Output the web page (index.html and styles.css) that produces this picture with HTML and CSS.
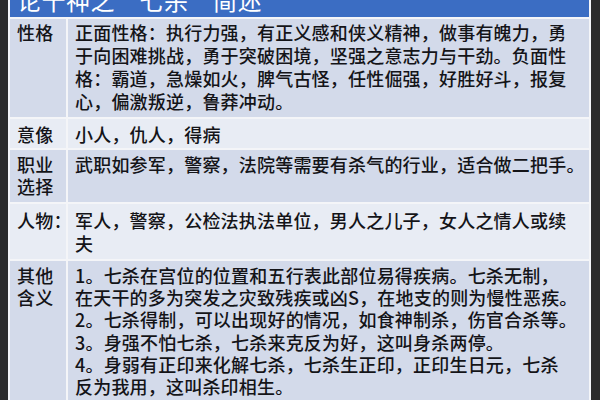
FILE: index.html
```html
<!DOCTYPE html>
<html lang="zh">
<head>
<meta charset="utf-8">
<link rel="stylesheet" href="styles.css">
</head>
<body>
<div class="frame">
  <div class="header"><div class="title">论十神之“七杀”简述</div></div>
  <div class="table">
    <div class="label r1 dark">性格</div>
    <div class="cell r1 dark">正面性格：执行力强，有正义感和侠义精神，做事有魄力，勇<br>于向困难挑战，勇于突破困境，坚强之意志力与干劲。负面性<br>格：霸道，急燥如火，脾气古怪，任性倔强，好胜好斗，报复<br>心，偏激叛逆，鲁莽冲动。</div>

    <div class="label r2 light">意像</div>
    <div class="cell r2 light">小人，仇人，得病</div>

    <div class="label r3 dark">职业<br>选择</div>
    <div class="cell r3 dark">武职如参军，警察，法院等需要有杀气的行业，适合做二把手。</div>

    <div class="label r4 light">人物：</div>
    <div class="cell r4 light">军人，警察，公检法执法单位，男人之儿子，女人之情人或续<br>夫</div>

    <div class="label r5 dark">其他<br>含义</div>
    <div class="cell r5 dark">1。七杀在宫位的位置和五行表此部位易得疾病。七杀无制，<br>在天干的多为突发之灾致残疾或凶S，在地支的则为慢性恶疾。<br>2。七杀得制，可以出现好的情况，如食神制杀，伤官合杀等。<br>3。身强不怕七杀，七杀来克反为好，这叫身杀两停。<br>4。身弱有正印来化解七杀，七杀生正印，正印生日元，七杀<br>反为我用，这叫杀印相生。<br>5。七杀七杀有一，中间以身杀两停，只有透出方“真杀”。</div>
  </div>
</div>
</body>
</html>
```

FILE: styles.css
```css
html, body {
  margin: 0;
  padding: 0;
}
body {
  background: #2b2b2b;
  width: 600px;
  height: 400px;
  overflow: hidden;
  font-family: "Noto Sans CJK SC", "Noto Sans", sans-serif;
  color: #141418;
}
.frame {
  margin-left: 8px;
  width: 583px;
  height: 400px;
  background: #f4f5f8;
  padding: 0 2px;
  box-sizing: border-box;
  overflow: hidden;
}
.header {
  height: 17px;
  background: #3b6dc3;
  overflow: hidden;
  padding-left: 7px;
}
.title {
  color: #ffffff;
  font-size: 24px;
  line-height: 24px;
  margin-top: -12px;
  letter-spacing: 0.5px;
  white-space: nowrap;
}
.table {
  margin-top: 2px;
  display: grid;
  grid-template-columns: 56px 1fr;
  grid-template-rows: 98px 29px 52px 55px 200px;
  gap: 2px;
  background: #f4f5f8;
}
.label, .cell {
  font-size: 18px;
  font-weight: 500;
  line-height: 23.4px;
  letter-spacing: 0.2px;
  white-space: nowrap;
}
.label {
  padding-left: 7px;
}
.cell {
  padding-left: 7px;
}
.dark {
  background: #d3daea;
}
.light {
  background: #e8ecf4;
}
.r1 { padding-top: 2px; line-height: 23px; }
.r2 { padding-top: 4px; }
.r3 { padding-top: 4px; line-height: 21.5px; }
.r4 { padding-top: 5px; }
.r5 { padding-top: 3px; line-height: 22.2px; }
```
